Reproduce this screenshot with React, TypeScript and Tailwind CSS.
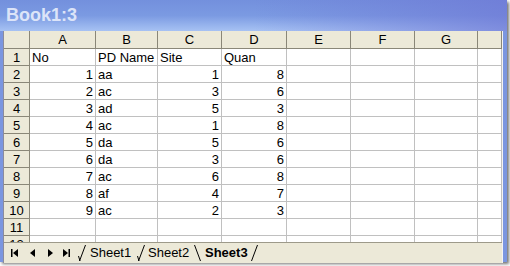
import React from "react";

const cols = ["A", "B", "C", "D", "E", "F", "G", ""];

const data: (string | number)[][] = [
  ["No", "PD Name", "Site", "Quan"],
  [1, "aa", 1, 8],
  [2, "ac", 3, 6],
  [3, "ad", 5, 3],
  [4, "ac", 1, 8],
  [5, "da", 5, 6],
  [6, "da", 3, 6],
  [7, "ac", 6, 8],
  [8, "af", 4, 7],
  [9, "ac", 2, 3],
  [],
  [],
];

const font = { fontFamily: '"Liberation Sans", Arial, sans-serif' };

// slanted tab edges
const Slash = ({ dir, hook }: { dir: "fwd" | "back"; hook?: boolean }) => (
  <svg width="9" height="18" viewBox="0 0 9 18" className="shrink-0">
    {dir === "fwd" ? (
      <path d="M1.5 17 L7.5 1" stroke="#000" strokeWidth="1" fill="none" />
    ) : (
      <path d="M1.5 1 L7.5 17" stroke="#000" strokeWidth="1" fill="none" />
    )}
    {hook && <path d="M0.5 12 L2 17" stroke="#000" strokeWidth="1" fill="none" />}
  </svg>
);

const App = () => {
  return (
    <div className="w-[510px] h-[266px] bg-white overflow-hidden" style={font}>
      {/* Window */}
      <div className="w-[507px] h-[262px] flex flex-col bg-[#7b96e0] shadow-[2px_2px_3px_rgba(0,0,0,0.55)]">
        {/* Title bar */}
        <div className="h-[31px] shrink-0 bg-gradient-to-b from-[#7390dd] via-[#7b9ae2] to-[#a7c2f3] relative">
          <div className="absolute inset-0 bg-gradient-to-r from-transparent via-transparent to-[#6f78d6]/70" />
          <div className="relative pl-[6px] pt-[4px] text-[18px] font-bold text-[#dce4f8] leading-[22px]">
            Book1:3
          </div>
        </div>

        {/* Body */}
        <div className="flex-1 flex flex-col ml-[3px] mr-[4px] border-l border-[#8c8c9c] border-r border-r-[#f4f4f4] bg-white">
          {/* Grid */}
          <div className="h-[211px] overflow-hidden">
            <div className="grid grid-cols-[26px_66px_62px_64px_65px_64px_64px_63px_24px] text-[13px] text-black">
              {/* header row */}
              <div className="h-[18px] bg-[#ece9d8] border-r border-b border-[#8a8778]" />
              {cols.map((c, i) => (
                <div
                  key={"h" + i}
                  className="h-[18px] bg-[#ece9d8] border-r border-b border-[#8a8778] flex items-center justify-center leading-none"
                >
                  {c}
                </div>
              ))}
              {/* rows */}
              {Array.from({ length: 12 }).map((_, r) => (
                <React.Fragment key={"r" + r}>
                  <div className="h-[17px] bg-[#ece9d8] border-r border-b border-[#8a8778] flex items-center justify-center leading-none">
                    {r + 1}
                  </div>
                  {cols.map((_, ci) => {
                    const v = data[r]?.[ci];
                    const num = typeof v === "number";
                    return (
                      <div
                        key={"c" + r + "-" + ci}
                        className={`h-[17px] border-r border-b border-[#c0c0c0] flex items-center leading-none px-[2px] ${
                          num ? "justify-end" : "justify-start"
                        }`}
                      >
                        {v ?? ""}
                      </div>
                    );
                  })}
                </React.Fragment>
              ))}
            </div>
          </div>

          {/* Sheet tabs bar */}
          <div className="flex-1 bg-[#ece9d8] border-t border-[#9d9a8a] flex items-center text-[13px] text-black">
            <div className="w-[74px] shrink-0 flex items-center pl-[7px]">
              <svg width="7" height="8" viewBox="0 0 7 8" className="shrink-0">
                <rect x="0" y="0" width="1.5" height="8" fill="#000" />
                <path d="M7 0 L2 4 L7 8 Z" fill="#000" />
              </svg>
              <svg width="5" height="8" viewBox="0 0 5 8" className="shrink-0 ml-[12px]">
                <path d="M5 0 L0 4 L5 8 Z" fill="#000" />
              </svg>
              <svg width="5" height="8" viewBox="0 0 5 8" className="shrink-0 ml-[13px]">
                <path d="M0 0 L5 4 L0 8 Z" fill="#000" />
              </svg>
              <svg width="7" height="8" viewBox="0 0 7 8" className="shrink-0 ml-[10px]">
                <path d="M0 0 L5 4 L0 8 Z" fill="#000" />
                <rect x="5.5" y="0" width="1.5" height="8" fill="#000" />
              </svg>
            </div>
            <Slash dir="fwd" hook />
            <span className="w-[50px] shrink-0 pl-[3px]">Sheet1</span>
            <Slash dir="fwd" hook />
            <span className="w-[47px] shrink-0 pl-[2px]">Sheet2</span>
            <Slash dir="back" />
            <span className="w-[48px] shrink-0 pl-[3px] font-bold">Sheet3</span>
            <Slash dir="fwd" />
          </div>
        </div>
      </div>
    </div>
  );
};

export default App;
